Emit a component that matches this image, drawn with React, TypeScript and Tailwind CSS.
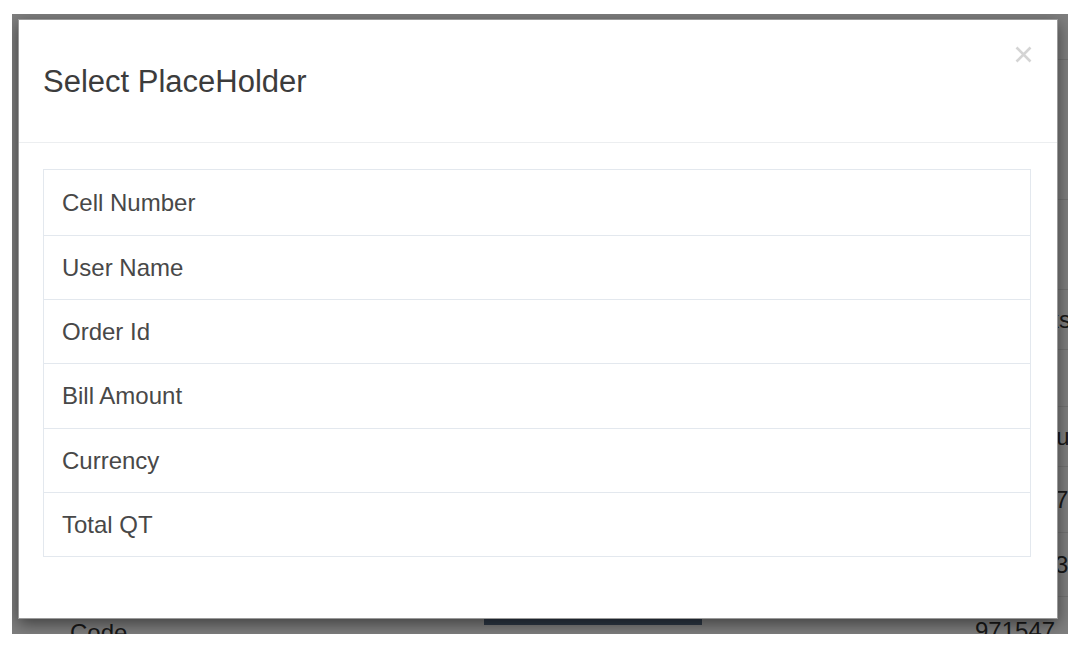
import React from "react";

const items = [
  { label: "Cell Number", h: "h-[66px]" },
  { label: "User Name", h: "h-[64px]" },
  { label: "Order Id", h: "h-[64px]" },
  { label: "Bill Amount", h: "h-[65px]" },
  { label: "Currency", h: "h-[64px]" },
  { label: "Total QT", h: "h-[64px]" },
];

const rightRows = [
  { t: "", h: "h-[46px]" },
  { t: "", h: "h-[140px]" },
  { t: "", h: "h-[90px]" },
  { t: "Remarks", h: "h-[60px]" },
  { t: "", h: "h-[57px]" },
  { t: "Tx Amount", h: "h-[60px]" },
  { t: "9715477", h: "h-[66px]" },
  { t: "9715473", h: "h-[64px]" },
];

export default function App() {
  return (
    <div
      className="w-[1077px] h-[651px] bg-white overflow-hidden"
      style={{ fontFamily: '"Liberation Sans", Arial, sans-serif' }}
    >
      <div className="ml-[12px] mt-[14px] w-[1056px] h-[620px] relative overflow-hidden bg-white">
        {/* underlying page */}
        <div className="flex h-full">
          <div className="flex-1 flex flex-col justify-end">
            <div className="flex items-start h-[15px]">
              <span className="ml-[58px] mt-[2px] text-[24px] leading-[24px] text-[#333]">Code</span>
              <div className="ml-[357px] w-[218px] h-[6px] bg-[#5d738f]" />
            </div>
          </div>
          <div className="w-[93px] flex flex-col">
            {rightRows.map((r, i) => (
              <div
                key={i}
                className={`${r.h} shrink-0 border-b border-[#e6e6e6] flex items-center text-[24px] text-[#333] whitespace-nowrap`}
              >
                {r.t}
              </div>
            ))}
            <div className="pt-[22px] text-[24px] leading-[24px] text-[#333] whitespace-nowrap">971547</div>
          </div>
        </div>

        {/* backdrop */}
        <div className="absolute inset-0 bg-black/50" />

        {/* modal */}
        <div className="absolute left-[6px] top-[5px] w-[1040px] h-[600px] bg-white border border-[#9a9a9a] shadow-[0_5px_15px_rgba(0,0,0,0.5)] flex flex-col">
          <div className="h-[123px] border-b border-[#eceef0] flex justify-between items-start pl-[24px] pr-[25px]">
            <h4 className="self-center mt-[2px] text-[31px] leading-[34px] text-[#3c3c3c] font-normal">
              Select PlaceHolder
            </h4>
            <button className="mt-[26px] w-[17px] h-[17px] flex items-center justify-center" aria-label="Close">
              <svg width="17" height="17" viewBox="0 0 17 17">
                <path d="M1.5 1.5 L15.5 15.5 M15.5 1.5 L1.5 15.5" stroke="#d4d4d4" strokeWidth="2.6" strokeLinecap="butt" />
              </svg>
            </button>
          </div>
          <div className="pt-[26px] px-[24px]">
            <div className="border-x border-b border-[#e3e8ee] w-[988px]">
              {items.map((it) => (
                <div
                  key={it.label}
                  className={`${it.h} border-t border-[#e3e8ee] flex items-center pl-[18px] text-[24px] text-[#484848]`}
                >
                  {it.label}
                </div>
              ))}
            </div>
          </div>
        </div>
      </div>
    </div>
  );
}
